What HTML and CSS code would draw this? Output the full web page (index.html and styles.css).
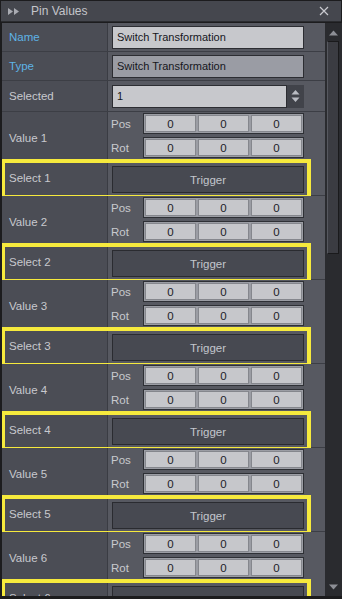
FILE: index.html
```html
<!DOCTYPE html>
<html>
<head>
<meta charset="utf-8">
<link rel="stylesheet" href="styles.css">
</head>
<body>
<div class="panel">
  <div class="titlebar">
    <svg class="ticon" width="12" height="7" viewBox="0 0 12 7"><path d="M0 0L5 3.5L0 7Z M6 0L11 3.5L6 7Z" fill="#a9abb2"/></svg>
    <span class="title">Pin Values</span>
    <svg class="close" width="10" height="10" viewBox="0 0 10 10"><path d="M1 1L9 9M9 1L1 9" stroke="#c9cacf" stroke-width="1.2"/></svg>
  </div>
  <div class="body">
    <div class="content">
      <div class="row r-field">
        <div class="label blue">Name</div>
        <div class="value"><div class="input">Switch Transformation</div></div>
      </div>
      <div class="row r-field">
        <div class="label blue">Type</div>
        <div class="value"><div class="input disabled">Switch Transformation</div></div>
      </div>
      <div class="row r-field r-selected">
        <div class="label">Selected</div>
        <div class="value"><div class="spin"><div class="input">1</div><div class="spinbtn"><svg width="9" height="14" viewBox="0 0 9 14"><path d="M4.5 1L8.5 5.5H0.5Z M4.5 13L8.5 8.5H0.5Z" fill="#b9bbc2"/></svg></div></div></div>
      </div>

      <div class="row r-vec"><div class="label">Value 1</div><div class="value vecs"><div class="vline"><span class="vl">Pos</span><div class="vgroup"><div class="cell">0</div><div class="cell">0</div><div class="cell">0</div></div></div><div class="vline"><span class="vl">Rot</span><div class="vgroup"><div class="cell">0</div><div class="cell">0</div><div class="cell">0</div></div></div></div></div>
      <div class="row r-sel"><div class="label">Select 1</div><div class="value"><div class="btn">Trigger</div></div></div>

      <div class="row r-vec"><div class="label">Value 2</div><div class="value vecs"><div class="vline"><span class="vl">Pos</span><div class="vgroup"><div class="cell">0</div><div class="cell">0</div><div class="cell">0</div></div></div><div class="vline"><span class="vl">Rot</span><div class="vgroup"><div class="cell">0</div><div class="cell">0</div><div class="cell">0</div></div></div></div></div>
      <div class="row r-sel"><div class="label">Select 2</div><div class="value"><div class="btn">Trigger</div></div></div>

      <div class="row r-vec"><div class="label">Value 3</div><div class="value vecs"><div class="vline"><span class="vl">Pos</span><div class="vgroup"><div class="cell">0</div><div class="cell">0</div><div class="cell">0</div></div></div><div class="vline"><span class="vl">Rot</span><div class="vgroup"><div class="cell">0</div><div class="cell">0</div><div class="cell">0</div></div></div></div></div>
      <div class="row r-sel"><div class="label">Select 3</div><div class="value"><div class="btn">Trigger</div></div></div>

      <div class="row r-vec"><div class="label">Value 4</div><div class="value vecs"><div class="vline"><span class="vl">Pos</span><div class="vgroup"><div class="cell">0</div><div class="cell">0</div><div class="cell">0</div></div></div><div class="vline"><span class="vl">Rot</span><div class="vgroup"><div class="cell">0</div><div class="cell">0</div><div class="cell">0</div></div></div></div></div>
      <div class="row r-sel"><div class="label">Select 4</div><div class="value"><div class="btn">Trigger</div></div></div>

      <div class="row r-vec"><div class="label">Value 5</div><div class="value vecs"><div class="vline"><span class="vl">Pos</span><div class="vgroup"><div class="cell">0</div><div class="cell">0</div><div class="cell">0</div></div></div><div class="vline"><span class="vl">Rot</span><div class="vgroup"><div class="cell">0</div><div class="cell">0</div><div class="cell">0</div></div></div></div></div>
      <div class="row r-sel"><div class="label">Select 5</div><div class="value"><div class="btn">Trigger</div></div></div>

      <div class="row r-vec"><div class="label">Value 6</div><div class="value vecs"><div class="vline"><span class="vl">Pos</span><div class="vgroup"><div class="cell">0</div><div class="cell">0</div><div class="cell">0</div></div></div><div class="vline"><span class="vl">Rot</span><div class="vgroup"><div class="cell">0</div><div class="cell">0</div><div class="cell">0</div></div></div></div></div>
      <div class="row r-sel"><div class="label">Select 6</div><div class="value"><div class="btn">Trigger</div></div></div>
    </div>
    <div class="scrollbar">
      <svg class="arrow" width="9" height="6" viewBox="0 0 9 6"><path d="M4.5 0.5L9 5.5H0Z" fill="#8d8f96"/></svg>
      <div class="track"><div class="thumb"></div></div>
      <svg class="arrow" width="9" height="6" viewBox="0 0 9 6"><path d="M4.5 5.5L9 0.5H0Z" fill="#8d8f96"/></svg>
    </div>
  </div>
</div>
</body>
</html>
```

FILE: styles.css
```css
html, body {
  margin: 0;
  padding: 0;
}
body {
  width: 342px;
  height: 599px;
  overflow: hidden;
  background: #1c1c1e;
  font-family: "Liberation Sans", "DejaVu Sans", sans-serif;
  font-size: 11px;
}
.panel {
  width: 342px;
  height: 599px;
  display: flex;
  flex-direction: column;
  background: #1c1c1e;
}
.titlebar {
  height: 20px;
  margin: 1px 1px 0 1px;
  background: #45474e;
  display: flex;
  align-items: center;
  padding: 0 0 0 7px;
  border-bottom: 1px solid #2a2b2f;
  flex: none;
}
.ticon { margin-right: 11px; }
.title {
  color: #c4c5ca;
  font-size: 12px;
  flex: 1;
}
.close { margin-right: 12px; }
.body {
  flex: 1;
  display: flex;
  min-height: 0;
  margin-top: 1px;
  margin-left: 2px;
  margin-bottom: 3px;
}
.content {
  width: 323px;
  overflow: hidden;
  background: #4b4d55;
}
.row {
  display: grid;
  grid-template-columns: 106px 1fr;
  border-bottom: 1px solid #3c3e45;
  position: relative;
}
.label {
  display: flex;
  align-items: center;
  padding-left: 7px;
  color: #c8c9ce;
  font-size: 11.5px;
  border-right: 1px solid #3a3c43;
  background: #4b4d55;
}
.label.blue { color: #5eb3e6; }
.value {
  background: #575961;
  padding: 2px 21px 2px 4px;
  display: flex;
  align-items: center;
}
.r-field { height: 29px; box-sizing: border-box; }
.r-field.r-selected { height: 31px; }
.input {
  flex: 1;
  height: 23px;
  box-sizing: border-box;
  border: 1px solid #2c2d32;
  background: #c7c8cc;
  color: #15161c;
  display: flex;
  align-items: center;
  padding-left: 4px;
}
.input.disabled { background: #9a9ca4; }
.spin { flex: 1; display: flex; }
.spinbtn {
  width: 17px;
  height: 23px;
  background: #41434a;
  display: flex;
  align-items: center;
  justify-content: center;
}
.r-vec { height: 48px; box-sizing: border-box; }
.r-vec .label { padding-top: 4px; }
.vecs {
  flex-direction: column;
  align-items: stretch;
  justify-content: flex-start;
  gap: 3px;
  padding-top: 1px;
  padding-left: 3px;
}
.vline {
  display: flex;
  align-items: center;
  height: 21px;
}
.vl {
  width: 32px;
  color: #c8c9ce;
  font-size: 11.5px;
}
.vgroup {
  flex: 1;
  height: 21px;
  box-sizing: border-box;
  border: 1px solid #2e3035;
  background: #9b9da4;
  display: flex;
  gap: 2px;
  padding: 1px;
}
.cell {
  flex: 1;
  box-sizing: border-box;
  border: 1px solid #85878d;
  background: #c6c7cb;
  color: #1c1d28;
  font-size: 11.5px;
  display: flex;
  align-items: center;
  justify-content: center;
}
.r-sel { height: 36px; box-sizing: border-box; }
.r-sel .value { padding-top: 6px; padding-bottom: 2px; }
.r-sel::after {
  content: "";
  position: absolute;
  left: -1px;
  right: 14px;
  top: -1px;
  bottom: -4px;
  border: 4px solid #f6ea3d;
  pointer-events: none;
}
.btn {
  flex: 1;
  height: 27px;
  box-sizing: border-box;
  border: 1px solid #2a2b30;
  background: #474951;
  color: #c3c6cd;
  font-size: 11.5px;
  display: flex;
  align-items: center;
  justify-content: center;
}
.scrollbar {
  width: 17px;
  background: #2a2b2f;
  display: flex;
  flex-direction: column;
  align-items: center;
  padding: 4px 0 3px;
  box-sizing: border-box;
}
.arrow { flex: none; margin: 3px 0; }
.track {
  flex: 1;
  width: 100%;
  padding: 2px 3px 0 2px;
  box-sizing: border-box;
}
.thumb {
  height: 213px;
  background: #3b3c42;
  border: 1px solid #1a1a1c;
  border-left-color: #56585f;
  box-sizing: border-box;
}
```
